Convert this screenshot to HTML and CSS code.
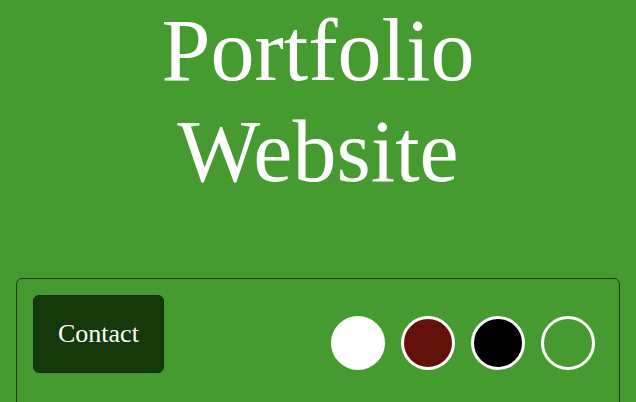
FILE: index.html
```html
<!DOCTYPE html>
<html>
<head>
<meta charset="utf-8">
<link rel="stylesheet" href="styles.css">
</head>
<body>
<h1 class="title">Portfolio<br>Website</h1>
<div class="panel">
  <button class="contact">Contact</button>
  <div class="swatches">
    <span class="dot dot-white"></span>
    <span class="dot dot-red"></span>
    <span class="dot dot-black"></span>
    <span class="dot dot-clear"></span>
  </div>
</div>
</body>
</html>
```
FILE: styles.css
```css
html, body {
  margin: 0;
  padding: 0;
  background: #469b30;
  font-family: "Liberation Serif", "Times New Roman", serif;
  color: #fff;
}
body {
  padding: 0 16px;
}
.title {
  margin: 0;
  padding-top: 0;
  font-size: 88px;
  font-weight: normal;
  text-align: center;
  line-height: 1.15;
  height: 278px;
}
.panel {
  border: 1px solid #1d3d14;
  border-radius: 6px;
  padding: 16px 24px 40px 16px;
  display: flex;
  justify-content: space-between;
  align-items: flex-start;
}
.contact {
  font-family: "Liberation Serif", "Times New Roman", serif;
  font-size: 26px;
  color: #fff;
  background: #15390b;
  border: 1px solid #10300a;
  border-radius: 6px;
  padding: 23px 24px;
  line-height: 1.15;
}
.swatches {
  display: flex;
  gap: 16px;
  margin-top: 21px;
}
.dot {
  width: 48px;
  height: 48px;
  border-radius: 50%;
  border: 3px solid #fff;
}
.dot-white { background: #fff; }
.dot-red { background: #64110b; }
.dot-black { background: #000; }
.dot-clear { background: transparent; }
```
